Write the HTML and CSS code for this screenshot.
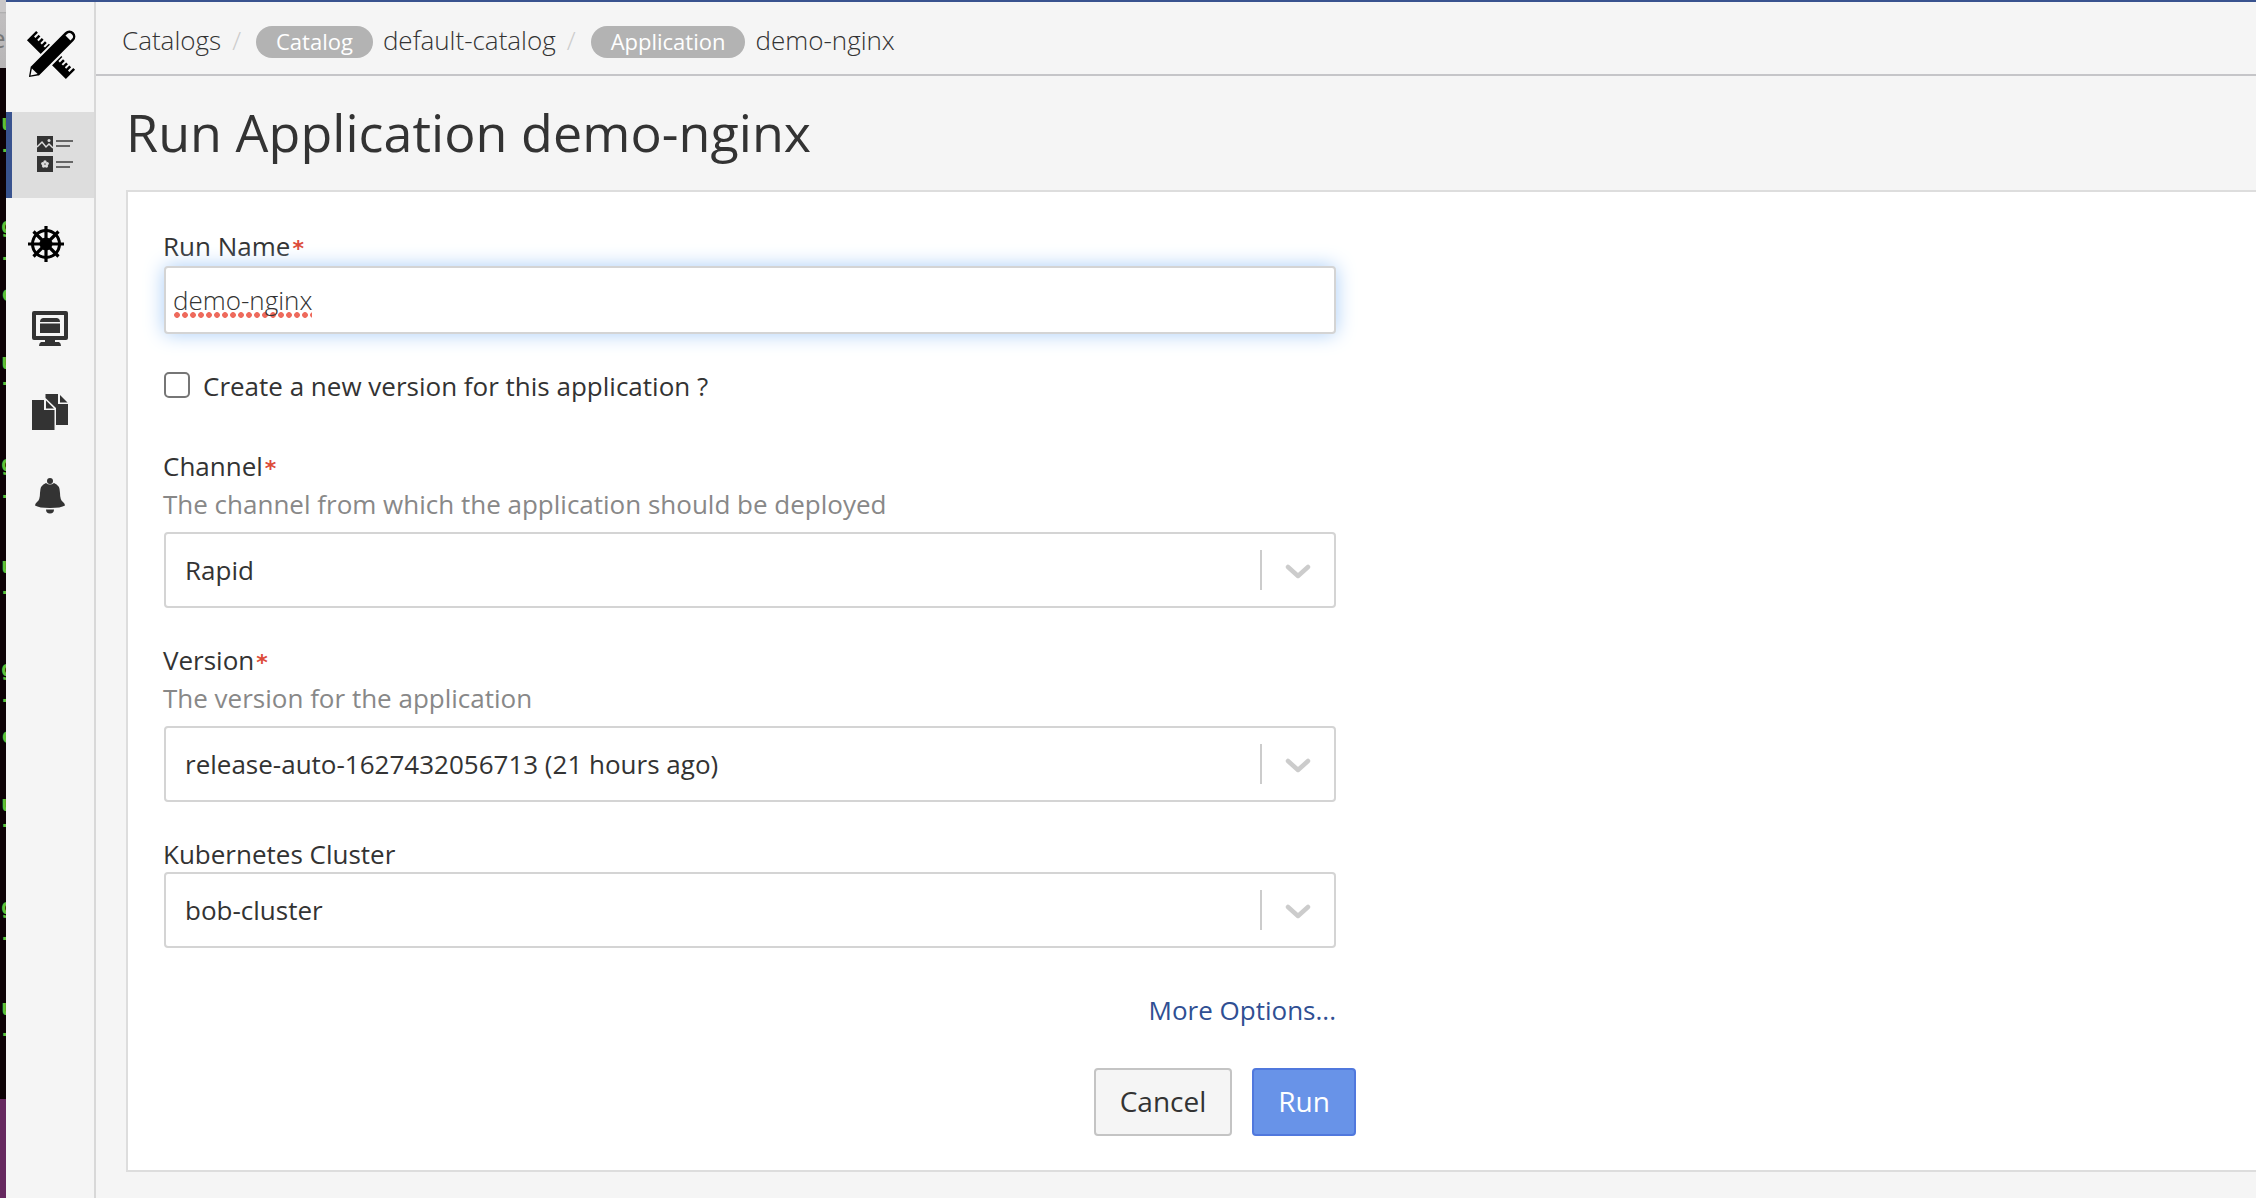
FILE: index.html
```html
<!DOCTYPE html>
<html lang="en">
<head>
<meta charset="utf-8">
<title>Run Application demo-nginx</title>
<link rel="stylesheet" href="styles.css">
</head>
<body>
<div class="screen">
  <div class="desktop">
    <div class="behind-window"><span class="behind-letter">e</span></div>
    <div class="terminal">
      <span class="term" style="top:40px">u</span><span class="term dash" style="top:67px">-</span>
      <span class="term" style="top:143px">g</span><span class="term dash" style="top:175px">-</span><span class="term" style="top:211px">c</span>
      <span class="term" style="top:279px">u</span><span class="term dash" style="top:300px">-</span>
      <span class="term" style="top:381px">g</span><span class="term dash" style="top:413px">-</span>
      <span class="term" style="top:483px">u</span><span class="term dash" style="top:509px">-</span>
      <span class="term" style="top:586px">g</span><span class="term dash" style="top:617px">-</span><span class="term" style="top:653px">c</span>
      <span class="term" style="top:721px">u</span><span class="term dash" style="top:742px">-</span>
      <span class="term" style="top:824px">g</span><span class="term dash" style="top:855px">-</span>
      <span class="term" style="top:925px">u</span><span class="term dash" style="top:951px">-</span>
    </div>
    <div class="wallpaper"></div>
  </div>
  <div class="app">
    <nav class="sidebar">
      <a class="logo">
        <svg width="50" height="50" viewBox="0 0 50 50">
          <g transform="translate(25 25) rotate(45)">
            <path d="M-27.500 6.500H27.500V-6.500H25V-1H23V-5.500H20.500V-1H18.500V-5.500H16V-1H14V-5.500H11.500V-1H9.500V-6.500H-9.500V-1H-11.500V-5.500H-14V-1H-16V-5.500H-18.500V-1H-20.500V-5.500H-23V-1H-25V-6.500H-27.500Z"/>
          </g>
          <g transform="translate(25 25) rotate(-45)">
            <path d="M-33 0L-23-7H26A7 7 0 0 1 26 7H-23Z" stroke="#f5f5f5" stroke-width="2"/>
            <path d="M-29 0L-23-4V4Z" fill="#f5f5f5"/><path d="M24-3.500H26A3.500 3.500 0 0 1 26 3.500H24Z" fill="#f5f5f5"/>
          </g>
        </svg>
      </a>
      <a class="item active">
        <svg width="36" height="36" viewBox="0 0 36 36">
          <path d="M0 0h16v16H0zM0 20h16v16H0z" fill="#333"/>
          <path d="M0 11L5 6L9 11L12 8L16 12" fill="none" stroke="#ddd" stroke-width="1.500"/><circle cx="12" cy="4.500" r="1.500" fill="#ddd"/>
          <g fill="#ddd"><circle cx="8" cy="26" r="1.700"/><circle cx="10.200" cy="27.600" r="1.700"/><circle cx="9.400" cy="30" r="1.700"/><circle cx="6.600" cy="30" r="1.700"/><circle cx="5.800" cy="27.600" r="1.700"/></g><circle cx="8" cy="28" r="1" fill="#999"/>
          <path d="M19 5H36M19 10H33M19 26H36M19 31H33" stroke="#666" stroke-width="2"/>
        </svg>
      </a>
      <a class="item helm">
        <svg width="38" height="38" viewBox="-19 -19 38 38" fill="none" stroke="#000">
          <circle r="13.500" stroke-width="3"/><circle r="6.500" fill="#000" stroke="none"/>
          <path d="M0-18V18M-18 0H18M-12.500-12.500L12.500 12.500M12.500-12.500L-12.500 12.500" stroke-width="3.200"/>
        </svg>
      </a>
      <a class="item monitor">
        <svg width="36" height="36" viewBox="0 0 36 36" fill="#333">
          <path fill-rule="evenodd" d="M2 0H34Q36 0 36 2V27Q36 29 34 29H2Q0 29 0 27V2Q0 0 2 0ZM4 4V25H32V4Z"/>
          <path d="M11 7H25Q28 7.500 28 11H8Q8 7.500 11 7ZM8 12.500H28V22H8ZM13 29H23V31H27Q29 32 29 35H7Q7 32 9 31H13Z"/>
        </svg>
      </a>
      <a class="item">
        <svg width="36" height="36" viewBox="0 0 36 36" fill="#333">
          <path d="M13.500 0H26V10H36V31H24V14L13.500 4Z"/><path d="M28 1L35.500 8.500H28Z"/>
          <path d="M0 6H12V16H22.500V36H0Z"/><path d="M14 6.500L22 14.500H14Z"/>
        </svg>
      </a>
      <a class="item">
        <svg width="32" height="38" viewBox="0 0 32 38" fill="#333">
          <circle cx="16" cy="4" r="3"/>
          <path d="M12 6Q16 9 20 6Q26 8 26 16Q26 23 29 25Q31 26.500 31 28.500Q27 31 16 31Q5 31 1 28.500Q1 26.500 3 25Q6 23 6 16Q6 8 12 6ZM12 32.500H20Q20 36.500 16 36.500Q12 36.500 12 32.500Z"/>
        </svg>
      </a>
    </nav>
    <main class="main">
      <header class="breadcrumbs">
        <span>Catalogs</span><span class="slash">/</span>
        <span class="pill">Catalog</span><span>default-catalog</span><span class="slash">/</span>
        <span class="pill">Application</span><span>demo-nginx</span>
      </header>
      <h1 class="title">Run Application demo-nginx</h1>
      <section class="card">
        <form class="form">
          <div class="label">Run Name<span class="req">*</span></div>
          <div class="input"><span class="typed">demo-nginx</span></div>
          <div class="check"><span class="box"></span><span>Create a new version for this application ?</span></div>
          <div class="label">Channel<span class="req">*</span></div>
          <div class="help">The channel from which the application should be deployed</div>
          <div class="select"><span class="value">Rapid</span><svg class="chevron" width="26" height="16" viewBox="0 0 26 16"><path d="M3 3L13 12L23 3"/></svg></div>
          <div class="label">Version<span class="req">*</span></div>
          <div class="help">The version for the application</div>
          <div class="select"><span class="value">release-auto-1627432056713 (21 hours ago)</span><svg class="chevron" width="26" height="16" viewBox="0 0 26 16"><path d="M3 3L13 12L23 3"/></svg></div>
          <div class="label tight">Kubernetes Cluster</div>
          <div class="select"><span class="value">bob-cluster</span><svg class="chevron" width="26" height="16" viewBox="0 0 26 16"><path d="M3 3L13 12L23 3"/></svg></div>
          <a class="more">More Options...</a>
          <div class="actions"><button type="button" class="btn">Cancel</button><button type="button" class="btn primary">Run</button></div>
        </form>
      </section>
    </main>
  </div>
</div>
</body>
</html>
```
FILE: styles.css
```css
* { box-sizing: border-box; }
body { margin: 0; font-family: "Open Sans", sans-serif; font-size: 26px; line-height: 36px; color: #333; background: #f5f5f5; }
.screen { display: flex; width: 2256px; height: 1198px; overflow: hidden; }

.desktop { width: 6px; flex: none; display: flex; flex-direction: column; overflow: hidden; }
.behind-window { position: relative; height: 68px; background: linear-gradient(#c9c7c8 12px, #aaa 12px, #c0bebf 14px, #b7b5b6); overflow: hidden; }
.behind-letter { position: absolute; left: -9px; top: 20px; color: #777; }
.terminal { position: relative; height: 1031px; background: #0d0206; overflow: hidden; }
.term { position: absolute; left: 1px; font: bold 22px/30px "DejaVu Sans Mono", monospace; color: #5fc138; }
.dash { left: 0; }
.wallpaper { flex: 1; background: #66285f; }

.app { flex: 1; min-width: 0; display: flex; border-top: 2px solid #39538f; }
.sidebar { width: 90px; flex: none; border-right: 2px solid #d8d8d8; }
.logo { display: flex; height: 110px; padding: 28px 0 0 20px; }
.item { display: flex; height: 84px; align-items: center; justify-content: center; }
.item svg, .logo svg { display: block; overflow: visible; }
.item.active { height: 86px; background: #ddd; border-left: 6px solid #39538f; padding: 0 0 2px 4px; }
.item.helm { height: 88px; padding: 3px 8px 0 0; }
.item.monitor { padding-top: 2px; }

.main { flex: 1; min-width: 0; }
.breadcrumbs { display: flex; align-items: flex-start; height: 74px; padding: 20px 26px 0; border-bottom: 2px solid #c5c5c8; font-weight: 300; white-space: nowrap; }
.slash { color: #ccc; margin: 0 15px 0 11px; }
.pill { height: 32px; margin: 4px 10px 0 0; padding: 0 20px; border-radius: 16px; background: #b3b3b3; color: #fff; font-size: 22px; line-height: 31px; font-weight: 500; }
.title { margin: 0; padding: 20px 0 0 30px; height: 114px; font-size: 52px; line-height: 72px; font-weight: 400; letter-spacing: .05px; }
.card { height: 982px; margin-left: 30px; padding: 36px 0 0 36px; border: 2px solid #ddd; border-right: 0; background: #fff; }
.form { width: 1172px; display: flex; flex-direction: column; }
.label { margin-left: -1px; height: 38px; }
.label.tight { height: 36px; }
.req { color: #dd4b39; margin-left: 2px; font: bold 22px/1 "DejaVu Sans", sans-serif; }
.help { margin-left: -1px; height: 46px; color: #888; }
.input { height: 68px; padding: 14px 7px 12px; margin-bottom: 34px; border: 2px solid #d4d4d4; border-radius: 4px; background: #fff; box-shadow: 0 0 20px #a9cdf7; font-weight: 300; }
.typed { display: inline-block; height: 38px; background: radial-gradient(circle at 3px 3px, #ee6a5c 2.500px, transparent 3.200px) 1px 30px / 8px 6px repeat-x; }
.check { display: flex; gap: 13px; height: 80px; }
.box { width: 26px; height: 26px; margin-top: 4px; border: 2px solid #767676; border-radius: 5px; }
.select { display: flex; align-items: center; height: 76px; margin-bottom: 34px; padding-left: 19px; border: 2px solid #d4d4d4; border-radius: 4px; }
.value { flex: 1; height: 40px; border-right: 2px solid #ccc; line-height: 40px; }
.chevron { margin: 3px 23px 0; fill: none; stroke: #ccc; stroke-width: 4.500; stroke-linecap: round; stroke-linejoin: round; }
.more { align-self: flex-end; margin: 10px 0 40px; color: #2f4f93; }
.actions { display: flex; gap: 20px; align-self: flex-end; margin-right: -20px; }
.btn { width: 138px; height: 68px; padding: 0 0 2px; border: 2px solid #c4c4c4; border-radius: 4px; background: #f5f5f5; color: #333; font: 28px/38px "Open Sans", sans-serif; }
.primary { width: 104px; background: #6893e8; border-color: #5078dd; color: #fff; }
```
